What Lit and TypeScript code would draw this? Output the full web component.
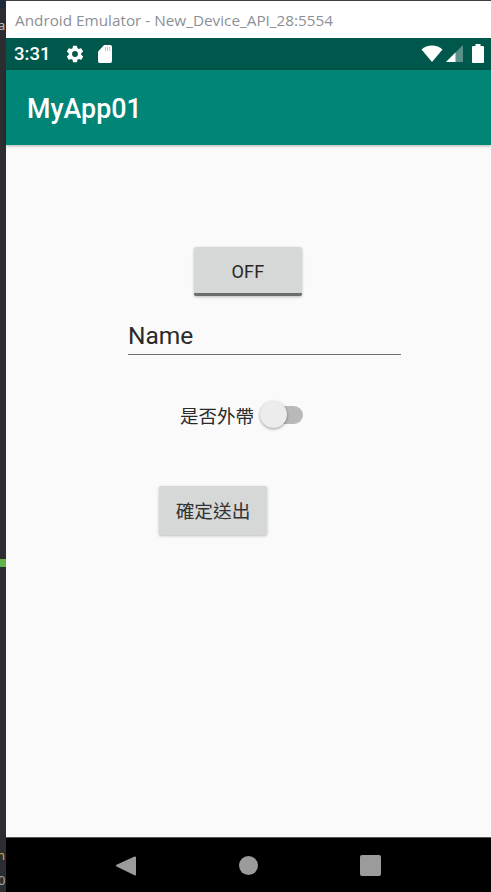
import { LitElement, html, css } from "lit";
import { customElement } from "lit/decorators.js";

@customElement("app-root")
export class AppRoot extends LitElement {
  static styles = css`
    :host { display: block; width: 491px; height: 892px; font-family: Roboto, "Noto Sans CJK TC", sans-serif; overflow: hidden; background: #fff; }
    * { box-sizing: border-box; }
    .desk { display: flex; width: 491px; height: 892px; }
    .strip { width: 6px; flex: none; background: #2b2d30; position: relative; overflow: hidden; font: 13px "Noto Sans", sans-serif; }
    .strip span { position: absolute; left: -1px; line-height: 14px; }
    .s1 { top: 18px; color: #bcbec4; left: -2px !important; }
    .s2 { top: 559px; left: 0 !important; width: 6px; height: 8px; background: #5fb44a; }
    .s3 { top: 848px; color: #d9a343; left: -3px !important; }
    .s4 { top: 873px; color: #9aa7b5; left: -2px !important; }
    .strip .topline { position: absolute; inset: 0 0 auto 0; height: 8px; background: #1d2a3a; }
    .win { flex: 1; display: flex; flex-direction: column; min-width: 0; }
    .topedge { height: 1px; background: #3c3f41; flex: none; }
    .title { height: 37px; flex: none; background: #fff; padding: 0 0 0 9px; display: flex; align-items: center; font: 15.3px "Open Sans", sans-serif; color: #8b8f96; }
    .status { height: 32px; flex: none; background: #00574b; display: flex; align-items: center; padding: 0 7px 1px 8px; color: #fff; }
    .time { font-size: 18.5px; font-weight: 500; width: 51px; }
    .gear { width: 20px; height: 20px; margin-right: 13px; }
    .sd { width: 14px; height: 18px; }
    .spacer { flex: 1; }
    .wifi { width: 22px; height: 18px; margin-right: 3px; }
    .signal { width: 17px; height: 17px; margin-right: 9px; }
    .batt { width: 12px; height: 19px; }
    .appbar { height: 75px; flex: none; background: #008577; display: flex; align-items: center; padding: 2px 0 0 21px; color: #fff; font-size: 26.8px; font-weight: 500; box-shadow: 0 1px 3px rgba(0,0,0,.3); position: relative; }
    .content { flex: 1; background: #fafafa; display: flex; flex-direction: column; align-items: flex-start; padding-top: 102px; }
    .btn { background: #d6d7d7; border-radius: 2px; box-shadow: 0 1px 3px rgba(0,0,0,.25); display: flex; align-items: center; justify-content: center; color: #262626; }
    .off { width: 108px; height: 49px; margin-left: 188px; font-size: 18px; font-weight: 400; border-bottom: 3px solid #6b6c6c; letter-spacing: .3px; padding-top: 3px; }
    .field { width: 273px; height: 43px; margin: 16px 0 0 122px; border-bottom: 1px solid #6f6f6f; font-size: 24.5px; color: #2a2a2a; line-height: 48px; }
    .row { display: flex; align-items: center; margin: 44px 0 0 174px; height: 32px; }
    .label { font-size: 18.5px; color: #2a2a2a; width: 80px; font-family: "Noto Sans CJK TC", sans-serif; white-space: nowrap; }
    .switch { position: relative; width: 44px; height: 28px; display: flex; align-items: center; }
    .track { margin-left: 12px; width: 31px; height: 18px; border-radius: 9px; background: #b9b9b9; }
    .thumb { position: absolute; left: 0; top: 0; width: 27px; height: 27px; border-radius: 50%; background: #ececec; box-shadow: 0 1px 3px rgba(0,0,0,.4); }
    .send { width: 108px; height: 49px; margin: 55px 0 0 153px; padding-bottom: 2px; font: 18.7px "Noto Sans CJK TC", sans-serif; color: #333; }
    .nav { height: 55px; flex: none; background: #000; border-top: 1px solid #555; display: flex; align-items: center; justify-content: center; gap: 99px; }
    .nav svg { width: 23px; height: 23px; }
  `;

  render() {
    return html`
      <div class="desk">
        <div class="strip">
          <div class="topline"></div>
          <span class="s1">a</span><span class="s2"></span><span class="s3">n</span><span class="s4">0</span>
        </div>
        <div class="win">
          <div class="topedge"></div>
          <div class="title">Android Emulator - New_Device_API_28:5554</div>
          <div class="status">
            <span class="time">3:31</span>
            <svg class="gear" viewBox="0 0 24 24" fill="#fff"><path d="M19.4 13c.04-.32.07-.66.07-1s-.03-.68-.07-1l2.1-1.65c.19-.15.24-.42.12-.64l-2-3.46c-.12-.22-.39-.3-.61-.22l-2.49 1c-.52-.4-1.08-.73-1.69-.98l-.38-2.65A.49.49 0 0 0 14 2h-4c-.25 0-.46.18-.49.42l-.38 2.65c-.61.25-1.17.59-1.69.98l-2.49-1c-.23-.09-.49 0-.61.22l-2 3.46c-.13.22-.07.49.12.64L4.57 11c-.04.32-.07.66-.07 1s.03.68.07 1l-2.11 1.65c-.19.15-.24.42-.12.64l2 3.46c.12.22.39.3.61.22l2.49-1c.52.4 1.08.73 1.69.98l.38 2.65c.03.24.24.42.49.42h4c.25 0 .46-.18.49-.42l.38-2.65c.61-.25 1.17-.59 1.69-.98l2.49 1c.23.09.49 0 .61-.22l2-3.46c.12-.22.07-.49-.12-.64L19.4 13zM12 15.5a3.5 3.5 0 1 1 0-7 3.5 3.5 0 0 1 0 7z"/></svg>
            <svg class="sd" viewBox="0 0 16 18" preserveAspectRatio="none" fill="#fff"><path d="M7 0h7a2 2 0 0 1 2 2v14a2 2 0 0 1-2 2H2a2 2 0 0 1-2-2V6.500z"/><path d="M8 2h1v4H8zM10.500 2h1v4h-1zM13 2h1v4h-1z" fill="#00574b" opacity=".35"/></svg>
            <span class="spacer"></span>
            <svg class="wifi" viewBox="0 0 22 18" fill="#fff"><path d="M11 17 .5 4.500C3.200 2 7 .5 11 .5s7.800 1.500 10.500 4z"/></svg>
            <svg class="signal" viewBox="0 0 17 17"><path d="M0 17 17 0v17z" fill="#fff" opacity=".35"/><path d="M0 17 9.500 7.500V17z" fill="#fff"/></svg>
            <svg class="batt" viewBox="0 0 12 19" fill="#fff"><path d="M3.500 0h5v2H11a1 1 0 0 1 1 1v15a1 1 0 0 1-1 1H1a1 1 0 0 1-1-1V3a1 1 0 0 1 1-1h2.500z"/></svg>
          </div>
          <div class="appbar">MyApp01</div>
          <div class="content">
            <div class="btn off">OFF</div>
            <div class="field">Name</div>
            <div class="row">
              <span class="label">是否外帶</span>
              <span class="switch"><span class="track"></span><span class="thumb"></span></span>
            </div>
            <div class="btn send">確定送出</div>
          </div>
          <div class="nav">
            <svg viewBox="0 0 23 23" fill="#9b9b9b"><path d="M20 2.500a1 1 0 0 1 1 1v17a1 1 0 0 1-1.500.8L1.500 12.500a1 1 0 0 1 0-1.700L19 2.700z"/></svg>
            <svg viewBox="0 0 23 23" fill="#9b9b9b"><circle cx="11.500" cy="11.500" r="9.500"/></svg>
            <svg viewBox="0 0 23 23" fill="#9b9b9b"><rect x="1" y="1" width="21" height="21" rx="2"/></svg>
          </div>
        </div>
      </div>
    `;
  }
}
